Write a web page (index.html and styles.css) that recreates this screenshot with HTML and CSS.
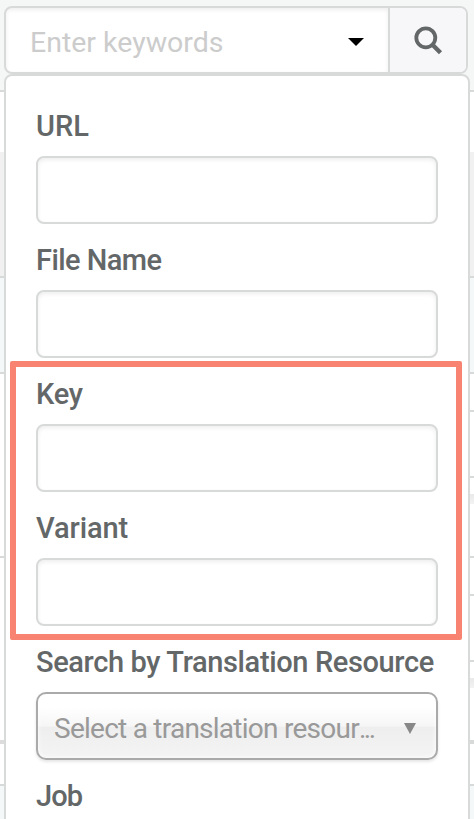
FILE: index.html
```html
<!DOCTYPE html>
<html lang="en">
<head>
<meta charset="utf-8">
<title>Search</title>
<link rel="stylesheet" href="styles.css">
</head>
<body>
<main class="page">
  <div class="edge edge-left"></div>
  <div class="content">
    <div class="search">
      <div class="keywords"><span class="placeholder">Enter keywords</span>
        <svg class="caret" width="16" height="8" viewBox="0 0 16 8"><path d="M0 0H16L8 8Z" fill="#000"/></svg>
      </div>
      <button class="go" aria-label="Search">
        <svg width="30" height="30" viewBox="0 0 30 30" fill="none" stroke="#636768"><circle cx="12.8" cy="12.8" r="9.5" stroke-width="3.8"/><path d="M19 19.2L27.5 27.7" stroke-width="4.4"/></svg>
      </button>
    </div>
    <form class="panel">
      <div class="field"><label class="label url">URL</label><div class="input"></div></div>
      <div class="field"><label class="label file">File Name</label><div class="input"></div></div>
      <div class="group">
        <div class="field"><label class="label key">Key</label><div class="input"></div></div>
        <div class="field"><label class="label variant">Variant</label><div class="input"></div></div>
        <div class="callout"></div>
      </div>
      <div class="field"><label class="label resource">Search by Translation Resource</label>
        <div class="select"><span class="choice">Select a translation resour<span class="dots">...</span></span>
          <svg class="arrow" width="12" height="11" viewBox="0 0 12 11"><path d="M0 0H12L6 11Z" fill="#888"/></svg>
        </div>
      </div>
      <div class="field"><label class="label job">Job</label></div>
    </form>
  </div>
  <div class="edge edge-right"></div>
</main>
</body>
</html>
```
FILE: styles.css
```css
* { box-sizing: border-box; }
body { margin: 0; font-family: Roboto, sans-serif; background: #fff; }
.page { display: grid; grid-template-columns: 4px 466px 4px; height: 819px; overflow: hidden; }
.edge-left {
  background: linear-gradient(#f5f7f7 90px, #d8d9d9 90px 92px, #fff 92px 152px, #f1f1f1 152px 276px, #d8d9d9 276px 278px, #f5f8f8 278px 372px, #d8d9d9 372px 374px, #fff 374px 556px, #d8d9d9 556px 558px, #fff 558px 740px, #dcdcdc 740px 744px, #fff 744px 784px, #d8d9d9 784px 786px, #f5f8f8 786px);
}
.edge-right {
  background: linear-gradient(#f5f7f7 90px, #d8d9d9 90px 92px, #fff 92px 152px, #f1f1f1 152px 276px, #d8d9d9 276px 278px, #f5f8f8 278px 372px, #d8d9d9 372px 374px, #fff 374px 410px, #d8d9d9 410px 412px, #fff 412px 476px, #d8d9d9 476px 478px, #fff 478px 494px, #e9e9e9 494px, #f3f3f3 504px, #fff 504px 556px, #d8d9d9 556px 558px, #fff 558px 594px, #d8d9d9 594px 596px, #fff 596px 660px, #d8d9d9 660px 662px, #fff 662px 678px, #e9e9e9 678px, #f3f3f3 688px, #fff 688px 740px, #d8d9d9 740px 744px, #fff 744px 784px, #d8d9d9 784px 786px, #f5f8f8 786px);
}
.content { display: flex; flex-direction: column; background: #f5f7f7; padding-top: 6px; height: 819px; }
.search { display: flex; width: 464px; height: 68px; flex: none; border: 2px solid #d8d9d9; border-radius: 8px; background: #fff; overflow: hidden; }
.keywords { flex: 1; display: flex; align-items: center; justify-content: space-between; padding: 6px 24px 0 24px; box-shadow: inset 0 2px 4px rgba(0,0,0,.07); }
.placeholder { font-size: 28.5px; line-height: 36px; color: #ccc; white-space: nowrap; }
.caret { margin-top: -2px; }
.go { width: 78px; border: 0; border-left: 2px solid #d8d9d9; background: #f7f7fa; padding: 0; display: flex; align-items: center; justify-content: center; }
.panel { height: 800px; flex: none; border: 2px solid #d8d9d9; border-radius: 8px; background: #fff; padding: 30px 30px 0; }
.field { height: 134px; }
.label { display: block; height: 50px; font-size: 29px; line-height: 40px; font-weight: 500; color: #636768; white-space: nowrap; }
.file { letter-spacing: -.55px; }
.key { letter-spacing: -.3px; }
.variant { letter-spacing: -.1px; }
.resource { letter-spacing: -.37px; }
.job { letter-spacing: -.9px; }
.input { width: 402px; height: 68px; border: 2px solid #d8d9d9; border-radius: 8px; box-shadow: inset 0 2px 4px rgba(0,0,0,.07); }
.group { position: relative; }
.callout { position: absolute; left: -26px; top: -13px; width: 452px; height: 279px; border: 6px solid #f98371; border-radius: 2px; }
.select { display: flex; align-items: center; justify-content: space-between; width: 402px; height: 68px; padding: 6px 20px 0 16px; border: 2px solid #aaa; border-radius: 10px; background: linear-gradient(#fff 20%, #f6f6f6 50%, #eee 52%, #f4f4f4 100%); box-shadow: inset 0 0 5px #fff, 0 2px 3px rgba(0,0,0,.1); }
.choice { font-size: 28px; line-height: 36px; color: #999; white-space: nowrap; letter-spacing: -.75px; }
.dots { letter-spacing: -2.4px; }
.arrow { margin-top: -2px; }
```
